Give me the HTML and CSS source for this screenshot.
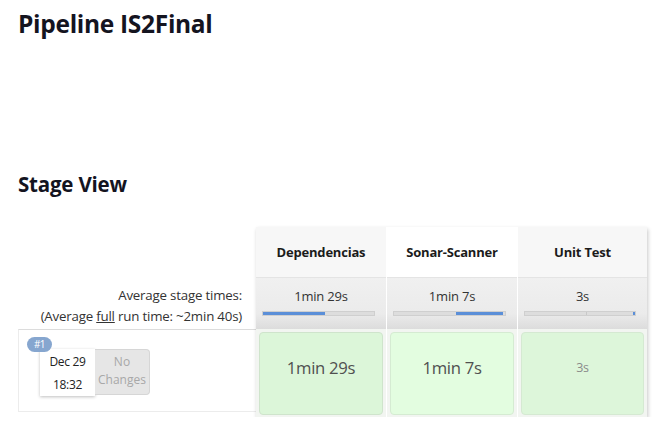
FILE: index.html
```html
<!DOCTYPE html>
<html>
<head>
<meta charset="utf-8">
<link rel="stylesheet" href="styles.css">
</head>
<body>
<div class="page">
  <h1 class="title">Pipeline IS2Final</h1>
  <h2 class="subtitle">Stage View</h2>
  <div class="stageview">
    <div class="leftcol">
      <div class="leftspacer"></div>
      <div class="avgtext">
        <div>Average stage times:</div>
        <div>(Average <u>full</u> run time: ~2min 40s)</div>
      </div>
      <div class="buildrow">
        <div class="buildinfo">
          <span class="badge">#1</span>
          <div class="datebox">
            <div>Dec 29</div>
            <div>18:32</div>
          </div>
          <div class="changes">No<br>Changes</div>
        </div>
      </div>
    </div>
    <div class="table">
      <div class="col">
        <div class="head">Dependencias</div>
        <div class="avg">
          <div class="avgtime">1min 29s</div>
          <div class="bar"><div class="fill" style="margin-left:0;width:56%"></div></div>
        </div>
        <div class="cellwrap"><div class="cell c1">1min 29s</div></div>
      </div>
      <div class="col">
        <div class="head white">Sonar-Scanner</div>
        <div class="avg">
          <div class="avgtime">1min 7s</div>
          <div class="bar"><div class="fill" style="margin-left:56%;width:42%"></div></div>
        </div>
        <div class="cellwrap"><div class="cell c2">1min 7s</div></div>
      </div>
      <div class="col last">
        <div class="head">Unit Test</div>
        <div class="avg">
          <div class="avgtime">3s</div>
          <div class="bar split"><div class="fill" style="margin-left:98.5%;width:1.5%"></div></div>
        </div>
        <div class="cellwrap"><div class="cell c3 short">3s</div></div>
      </div>
    </div>
  </div>
</div>
</body>
</html>
```
FILE: styles.css
```css
html, body {
  margin: 0;
  padding: 0;
  background: #fff;
}
body {
  font-family: "Open Sans", "Noto Sans", sans-serif;
  color: #333;
}
.page {
  padding: 8px 0 0 18px;
}
.title {
  margin: 0;
  font-size: 24.5px;
  line-height: 32px;
  font-weight: 700;
  color: #14141f;
  letter-spacing: -0.3px;
}
.subtitle {
  margin: 130px 0 0 0;
  font-size: 20.5px;
  line-height: 28px;
  font-weight: 700;
  color: #14141f;
  letter-spacing: -0.2px;
}
.stageview {
  margin-top: 29px;
  display: flex;
  align-items: flex-start;
}
.leftcol {
  width: 238px;
  display: flex;
  flex-direction: column;
}
.leftspacer {
  height: 51px;
}
.avgtext {
  height: 51px;
  box-sizing: border-box;
  padding: 7px 14px 0 0;
  text-align: right;
  font-size: 13.3px;
  line-height: 21px;
  color: #333;
  letter-spacing: -0.2px;
}
.buildrow {
  height: 83px;
  box-sizing: border-box;
  border-top: 1px solid #dcdcdc;
  border-left: 1px solid #ececec;
  border-bottom: 1px solid #ececec;
  padding: 19px 0 0 21px;
}
.buildinfo {
  position: relative;
  display: flex;
}
.badge {
  position: absolute;
  left: -13px;
  top: -12px;
  width: 25px;
  height: 15px;
  border-radius: 8px;
  background: #86a6cf;
  color: #fff;
  font-size: 10px;
  line-height: 15px;
  text-align: center;
  letter-spacing: -0.5px;
}
.datebox {
  width: 55px;
  height: 47px;
  background: #fff;
  box-shadow: 0 1px 3px rgba(0,0,0,0.25);
  font-size: 12px;
  line-height: 23px;
  text-align: center;
  color: #222;
  letter-spacing: -0.3px;
  box-sizing: border-box;
  padding-top: 1px;
}
.changes {
  width: 55px;
  height: 46px;
  box-sizing: border-box;
  background: #e6e6e6;
  border: 1px solid #d6d6d6;
  border-left: none;
  border-radius: 0 4px 4px 0;
  color: #a8a8a8;
  font-size: 12px;
  line-height: 18px;
  text-align: center;
  padding-top: 3px;
}
.table {
  display: flex;
  box-shadow: 1px 2px 4px rgba(0,0,0,0.22);
  background: #fff;
}
.col {
  width: 130px;
  display: flex;
  flex-direction: column;
  border-right: 1px solid #fff;
}
.col.last {
  border-right: none;
  width: 129px;
}
.head {
  height: 51px;
  background: #f7f7f7;
  font-weight: 700;
  font-size: 13px;
  line-height: 51px;
  text-align: center;
  color: #1b1b1b;
  letter-spacing: -0.2px;
  border-bottom: 1px solid #e4e4e4;
  box-sizing: border-box;
}
.head.white {
  background: #fff;
}
.avg {
  height: 51px;
  box-sizing: border-box;
  background: linear-gradient(#f0f0f0 0%, #ebebeb 70%, #dcdcdc 100%);
  padding: 8px 11px 0 6px;
}
.avgtime {
  text-align: center;
  font-size: 13px;
  line-height: 20px;
  color: #333;
  letter-spacing: -0.2px;
  margin-right: -5px;
}
.bar {
  margin-top: 5px;
  height: 5px;
  box-sizing: border-box;
  background: #dddddd;
  border: 1px solid #cfcfcf;
  display: flex;
}
.bar.split {
  background: linear-gradient(90deg, #dddddd 0 55.5%, #c8c8c8 55.5% 56.5%, #dddddd 56.5% 100%);
}
.fill {
  height: 3px;
  background: #5b8fd8;
}
.cellwrap {
  background: #f2f5f1;
  padding: 3px 3px 2px 3px;
  height: 88px;
  box-sizing: border-box;
}
.cell {
  height: 100%;
  box-sizing: border-box;
  border: 1px solid #cfe4cc;
  border-radius: 4px;
  display: flex;
  align-items: center;
  justify-content: center;
  padding-bottom: 12px;
  font-size: 16.7px;
  color: #505050;
  letter-spacing: -0.3px;
}
.c1 { background: #dcf6d9; }
.c2 { background: #e3fde0; border-color: #d5ebd2; }
.c3 { background: #ddf6da; border-color: #d5e9d2; }
.cell.short {
  font-size: 12.5px;
  color: #8a8a8a;
}
```
